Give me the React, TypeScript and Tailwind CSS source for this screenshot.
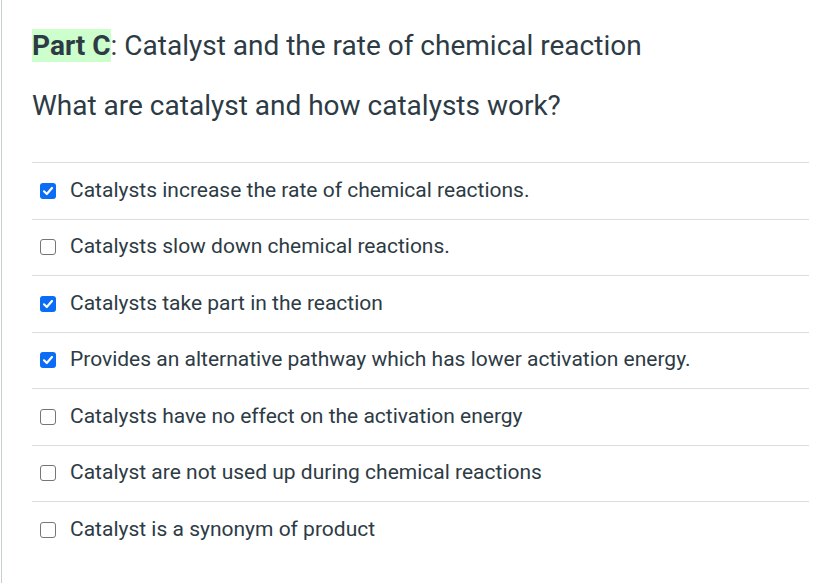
import React from "react";

const options = [
  { text: "Catalysts increase the rate of chemical reactions.", checked: true },
  { text: "Catalysts slow down chemical reactions.", checked: false },
  { text: "Catalysts take part in the reaction", checked: true },
  { text: "Provides an alternative pathway which has lower activation energy.", checked: true },
  { text: "Catalysts have no effect on the activation energy", checked: false },
  { text: "Catalyst are not used up during chemical reactions", checked: false },
  { text: "Catalyst is a synonym of product", checked: false },
];

function Box({ checked }: { checked: boolean }) {
  if (checked) {
    return (
      <span className="w-[16px] h-[16px] rounded-[3px] bg-[#0b6cf5] flex items-center justify-center shrink-0">
        <svg width="12" height="12" viewBox="0 0 12 12" fill="none">
          <path d="M2 6.3 L4.8 9 L10 3" stroke="white" strokeWidth="2.2" strokeLinecap="round" strokeLinejoin="round" />
        </svg>
      </span>
    );
  }
  return <span className="w-[16px] h-[16px] rounded-[3px] border-[1.5px] border-[#767676] bg-white shrink-0" />;
}

export default function App() {
  return (
    <div className="w-[835px] h-[583px] bg-white overflow-hidden pl-px" style={{ fontFamily: "Roboto, 'Liberation Sans', sans-serif" }}>
      <div className="h-full border-l border-[#c7cdd1] pl-[30px] pr-[26px] text-[#2d3b45]">
        <div className="pt-[29px] text-[28px] leading-[34px]">
          <span className="bg-[#ccffcc] font-bold">Part C</span>: Catalyst and the rate of chemical reaction
        </div>
        <div className="mt-[26px] text-[28px] leading-[34px]">What are catalyst and how catalysts work?</div>
        <div className="mt-[39px]">
          {options.map((o, i) => (
            <div key={i} className="flex items-center h-[56.5px] border-t border-[#dddddd] pl-[8px]">
              <Box checked={o.checked} />
              <span className="ml-[14px] mb-[2px] text-[21px] leading-[26px]">{o.text}</span>
            </div>
          ))}
        </div>
      </div>
    </div>
  );
}
